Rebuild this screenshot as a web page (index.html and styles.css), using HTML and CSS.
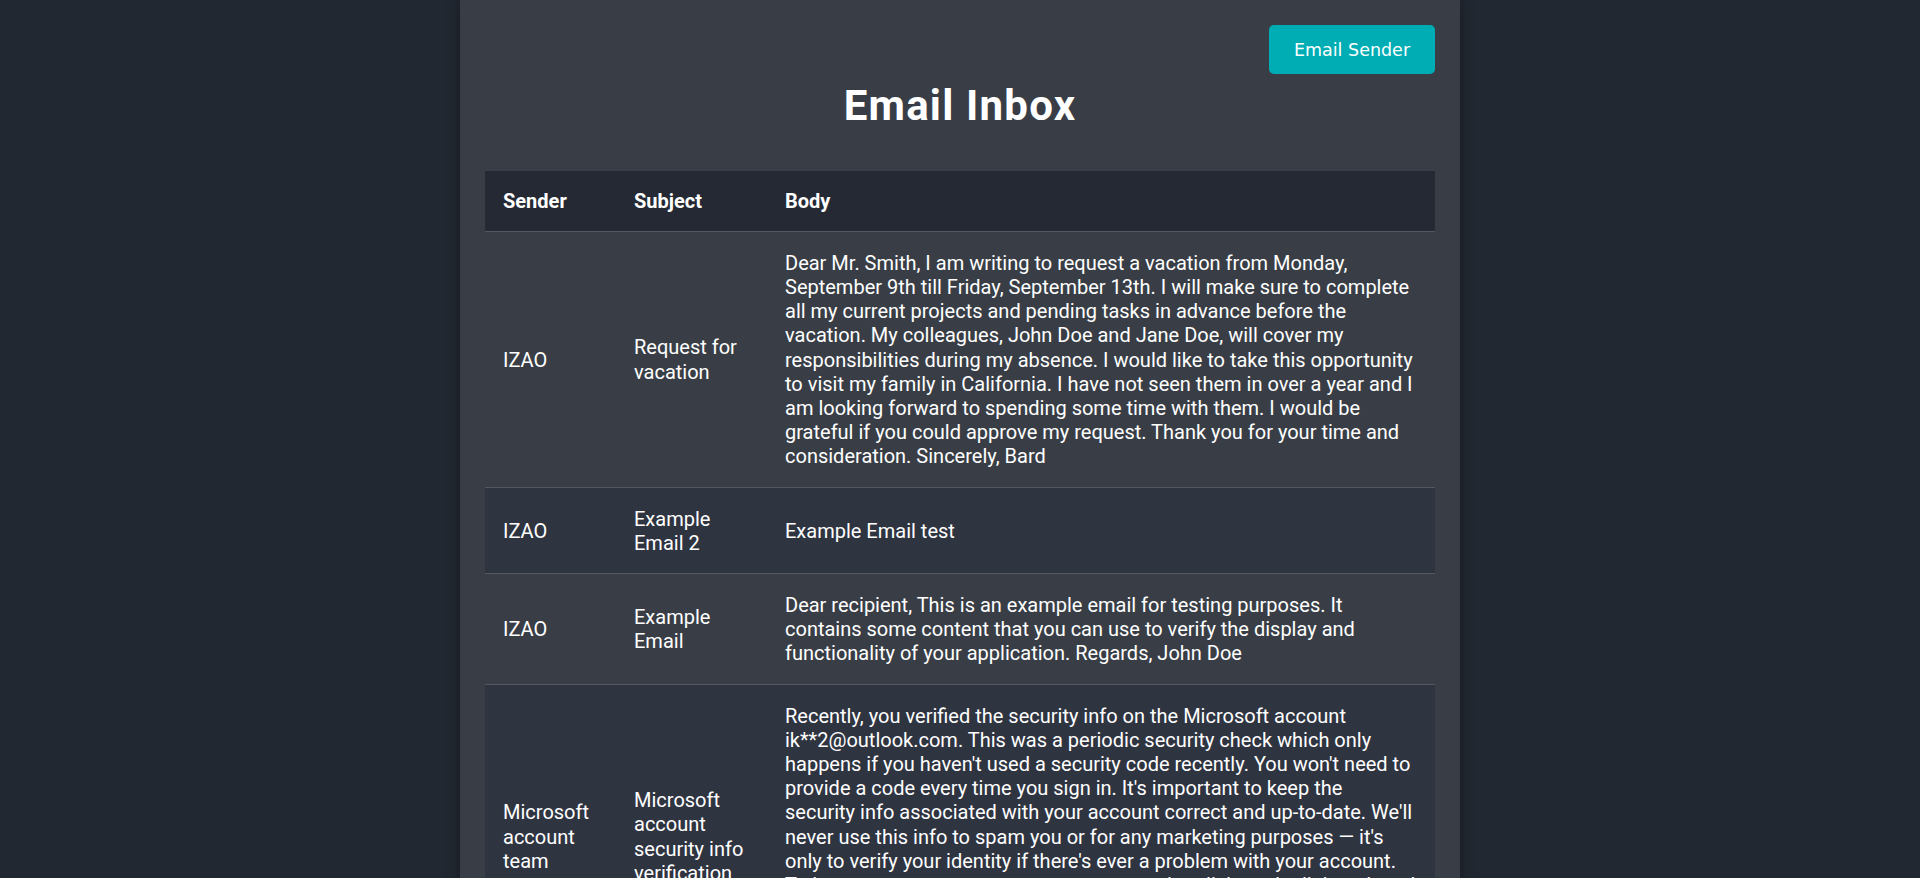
FILE: index.html
```html
<!DOCTYPE html>
<html lang="en">
<head>
<meta charset="utf-8">
<title>Email Inbox</title>
<link rel="stylesheet" href="styles.css">
</head>
<body>
<main class="container">
  <div class="toolbar">
    <button class="send-btn" type="button">Email Sender</button>
  </div>
  <h1 class="title">Email Inbox</h1>
  <table class="inbox">
    <colgroup>
      <col class="col-sender">
      <col class="col-subject">
      <col class="col-body">
    </colgroup>
    <thead>
      <tr>
        <th>Sender</th>
        <th>Subject</th>
        <th>Body</th>
      </tr>
    </thead>
    <tbody>
      <tr>
        <td>IZAO</td>
        <td>Request for vacation</td>
        <td>Dear Mr. Smith, I am writing to request a vacation from Monday, September 9th till Friday, September 13th. I will make sure to complete all my current projects and pending tasks in advance before the vacation. My colleagues, John Doe and Jane Doe, will cover my responsibilities during my absence. I would like to take this opportunity to visit my family in California. I have not seen them in over a year and I am looking forward to spending some time with them. I would be grateful if you could approve my request. Thank you for your time and consideration. Sincerely, Bard</td>
      </tr>
      <tr>
        <td>IZAO</td>
        <td>Example Email 2</td>
        <td>Example Email test</td>
      </tr>
      <tr>
        <td>IZAO</td>
        <td>Example Email</td>
        <td>Dear recipient, This is an example email for testing purposes. It contains some content that you can use to verify the display and functionality of your application. Regards, John Doe</td>
      </tr>
      <tr>
        <td>Microsoft account team</td>
        <td>Microsoft account security info verification</td>
        <td>Recently, you verified the security info on the Microsoft account ik**2@outlook.com. This was a periodic security check which only happens if you haven't used a security code recently. You won't need to provide a code every time you sign in. It's important to keep the security info associated with your account correct and up-to-date. We'll never use this info to spam you or for any marketing purposes — it's only to verify your identity if there's ever a problem with your account. To learn more, you can go to account security, click on the link and read http://go.microsoft.com/fwlink/?LinkID=603994 for more details. Thanks, The Microsoft account team. Please do not reply to this message.</td>
      </tr>
    </tbody>
  </table>
</main>
</body>
</html>
```

FILE: styles.css
```css
html, body {
  margin: 0;
  padding: 0;
}

body {
  background: #222831;
  color: #ffffff;
  font-family: Roboto, "Liberation Sans", Arial, sans-serif;
}

.container {
  width: 1000px;
  box-sizing: border-box;
  margin: 0 auto;
  padding: 25px 25px 40px;
  background: #393e46;
  min-height: 100vh;
  box-shadow: 0 0 14px rgba(0, 0, 0, 0.35);
}

.toolbar {
  display: flex;
  justify-content: flex-end;
}

.send-btn {
  background: #00adb5;
  color: #ffffff;
  border: none;
  border-radius: 5px;
  height: 49px;
  width: 166px;
  padding: 0;
  font-family: "DejaVu Sans", Verdana, sans-serif;
  font-size: 17.5px;
  cursor: pointer;
}

.title {
  margin: 8px 0 41px;
  text-align: center;
  font-size: 42px;
  letter-spacing: 1.2px;
  font-weight: 700;
  line-height: 48px;
}

.inbox {
  width: 100%;
  border-collapse: collapse;
  table-layout: fixed;
  font-size: 20px;
  line-height: 24.2px;
}

.col-sender { width: 131px; }
.col-subject { width: 151px; }

.inbox th,
.inbox td {
  padding: 18.5px 18px;
  text-align: left;
  vertical-align: middle;
  border-bottom: 1px solid #55595f;
}

.inbox th {
  background: #252934;
  font-weight: 700;
  padding-top: 18px;
  padding-bottom: 18px;
}

.inbox tbody tr:nth-child(even) {
  background: #2f3441;
}
```
